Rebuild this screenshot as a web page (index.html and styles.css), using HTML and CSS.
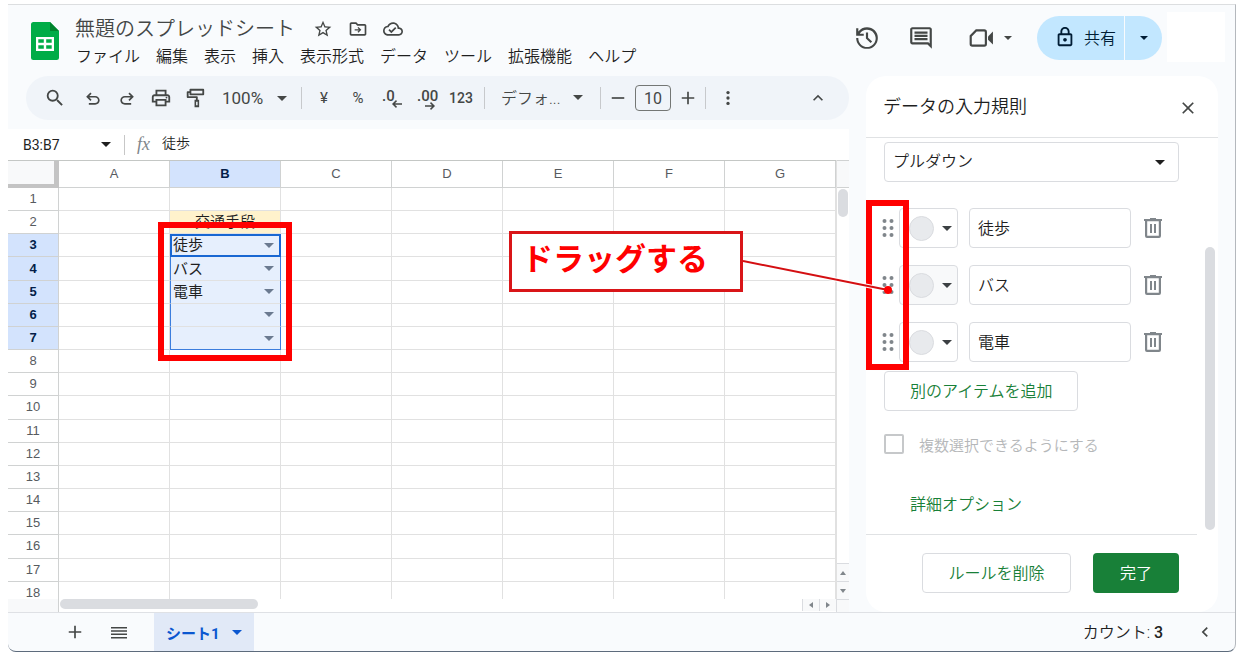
FILE: index.html
```html
<!DOCTYPE html>
<html lang="ja">
<head>
<meta charset="utf-8">
<title>無題のスプレッドシート</title>
<link rel="stylesheet" href="styles.css">
</head>
<body>
<div class="app">
  <header class="header">
    <svg class="logo" viewBox="0 0 28 38"><path fill="#00ac47" d="M2.500 0H19l9 9v26.500a2.500 2.500 0 0 1-2.500 2.500h-23A2.500 2.500 0 0 1 0 35.500v-33A2.500 2.500 0 0 1 2.500 0z"/><path fill="#00832d" d="M19 0l9 9h-9z"/><path fill="#fff" fill-rule="evenodd" d="M5 15h18v14H5zM7.300 17.300v3.500h5.500v-3.500zM15.200 17.300v3.500h5.500v-3.500zM7.300 23.200v3.500h5.500v-3.500zM15.200 23.200v3.500h5.500v-3.500z"/></svg>
    <div class="doc">
      <div class="title-row">
        <h1 class="title">無題のスプレッドシート</h1>
        <button class="icon-btn" aria-label="スター"><svg class="i20" viewBox="0 0 24 24"><path d="M22 9.240l-7.190-.62L12 2 9.190 8.630 2 9.240l5.460 4.730L5.820 21 12 17.270 18.180 21l-1.630-7.030L22 9.240zM12 15.400l-3.760 2.270 1-4.280-3.320-2.880 4.380-.38L12 6.100l1.710 4.040 4.380.38-3.320 2.880 1 4.280L12 15.400z"/></svg></button>
        <button class="icon-btn" aria-label="移動"><svg class="i20" viewBox="0 0 24 24"><path d="M20 6h-8l-2-2H4c-1.100 0-2 .9-2 2v12c0 1.100.9 2 2 2h16c1.100 0 2-.9 2-2V8c0-1.100-.9-2-2-2zm0 12H4V6h5.170l2 2H20v10zm-7.500-1.500L16 13l-3.500-3.500-1.100 1.100 1.600 1.600H8v1.600h5l-1.600 1.600z"/></svg></button>
        <button class="icon-btn" aria-label="保存状態"><svg class="i20" viewBox="0 0 24 24"><path d="M19.350 10.040C18.670 6.590 15.640 4 12 4 9.110 4 6.600 5.640 5.350 8.040 2.340 8.360 0 10.910 0 14c0 3.310 2.690 6 6 6h13c2.760 0 5-2.240 5-5 0-2.640-2.050-4.780-4.650-4.960zM19 18H6c-2.210 0-4-1.790-4-4s1.790-4 4-4h.71C7.370 7.690 9.480 6 12 6c3.040 0 5.500 2.460 5.500 5.500v.5H19c1.660 0 3 1.340 3 3s-1.340 3-3 3zm-9-3.820l-2.090-2.090L6.500 13.500 10 17l6.010-6.010-1.410-1.410z"/></svg></button>
      </div>
      <nav class="menu">
        <button>ファイル</button><button>編集</button><button>表示</button><button>挿入</button><button>表示形式</button><button>データ</button><button>ツール</button><button>拡張機能</button><button>ヘルプ</button>
      </nav>
    </div>
    <div class="actions">
      <button class="icon-btn" aria-label="変更履歴"><svg class="i26" viewBox="0 0 24 24"><path d="M12 2a10 10 0 0 0-8 4V3H2v7h7V8H5.300A8 8 0 1 1 4 12H2A10 10 0 1 0 12 2zm-1 5v5.500l4.300 4.200 1.400-1.400-3.700-3.600V7z"/></svg></button>
      <button class="icon-btn comment" aria-label="コメント"><svg class="i26" viewBox="0 0 24 24"><path d="M21.990 4c0-1.100-.89-2-1.990-2H4c-1.100 0-2 .9-2 2v12c0 1.100.9 2 2 2h14l4 4-.01-18zM20 4v13.170L18.830 16H4V4h16zM6 12h12v2H6zm0-3h12v2H6zm0-3h12v2H6z"/></svg></button>
      <button class="icon-btn meet" aria-label="ビデオ通話"><svg class="i26" viewBox="0 0 24 24"><path fill-rule="evenodd" d="M7.200 4H15a2.500 2.500 0 0 1 2.500 2.500v11A2.500 2.500 0 0 1 15 20H4a2.500 2.500 0 0 1-2.500-2.500V9.700zM8 6L3.500 10.500v7q0 .5.5.5h11q.5 0 .5-.5v-11q0-.5-.5-.5z"/><path d="M18.500 10.500L23 6v12l-4.500-4.500z"/></svg><span class="caret"></span></button>
      <div class="share">
        <button class="share-main"><svg class="i22" viewBox="0 0 24 24"><path d="M18 8h-1V6c0-2.760-2.240-5-5-5S7 3.240 7 6v2H6c-1.100 0-2 .9-2 2v10c0 1.100.9 2 2 2h12c1.100 0 2-.9 2-2V10c0-1.100-.9-2-2-2zM9 6c0-1.660 1.340-3 3-3s3 1.340 3 3v2H9V6zm9 14H6V10h12v10zm-6-3c1.100 0 2-.9 2-2s-.9-2-2-2-2 .9-2 2 .9 2 2 2z"/></svg>共有</button>
        <button class="share-more" aria-label="共有オプション"><span class="caret"></span></button>
      </div>
      <div class="avatar"></div>
    </div>
  </header>

  <div class="body">
    <main class="main">
      <div class="toolbar">
        <button class="tool search" aria-label="検索"><svg class="i22" viewBox="0 0 24 24"><path d="M15.500 14h-.79l-.28-.27A6.471 6.471 0 0 0 16 9.500 6.500 6.500 0 1 0 9.500 16c1.610 0 3.090-.59 4.230-1.570l.27.28v.79l5 4.990L20.490 19l-4.990-5zm-6 0C7.010 14 5 11.990 5 9.500S7.010 5 9.500 5 14 7.010 14 9.500 11.990 14 9.500 14z"/></svg></button>
        <button class="tool" aria-label="元に戻す"><svg class="i20" viewBox="0 0 24 24"><path d="M7 20v-2h7.500c2 0 3.500-1.300 3.500-3.200s-1.500-3.300-3.500-3.300H7.600l2.700 2.700-1.400 1.400L3.800 10.500l5.100-5.100 1.400 1.400-2.700 2.700h6.900c3.100 0 5.500 2.200 5.500 5.300S17.600 20 14.500 20z"/></svg></button>
        <button class="tool" aria-label="やり直し"><svg class="i20" viewBox="0 0 24 24"><path d="M17 20v-2H9.500c-2 0-3.500-1.300-3.500-3.200s1.500-3.300 3.500-3.300h6.900l-2.700 2.700 1.400 1.400 5.100-5.100-5.100-5.100-1.400 1.400 2.700 2.700H9.500C6.400 9.500 4 11.700 4 14.800S6.400 20 9.500 20z"/></svg></button>
        <button class="tool" aria-label="印刷"><svg class="i22" viewBox="0 0 24 24"><path d="M19 8h-1V3H6v5H5c-1.660 0-3 1.340-3 3v6h4v4h12v-4h4v-6c0-1.660-1.340-3-3-3zM8 5h8v3H8V5zm8 12v2H8v-4h8v2zm2-2v-2H6v2H4v-4c0-.55.45-1 1-1h14c.55 0 1 .45 1 1v4h-2z"/><circle cx="18" cy="11.500" r="1"/></svg></button>
        <button class="tool" aria-label="書式を貼り付け"><svg class="i22" viewBox="0 0 24 24"><path fill-rule="evenodd" d="M7 2h14a1 1 0 0 1 1 1v5a1 1 0 0 1-1 1H7a1 1 0 0 1-1-1V6.500H5V10h9a1 1 0 0 1 1 1v3h1.500v8h-5v-8H13v-2H4a1 1 0 0 1-1-1V5.500a1 1 0 0 1 1-1h2V3a1 1 0 0 1 1-1zm1 2v3h12V4zm5.200 12v4h1.600v-4z"/></svg></button>
        <button class="tool zoom">100%<span class="caret"></span></button>
        <span class="sep"></span>
        <button class="tool small">¥</button>
        <button class="tool small">%</button>
        <button class="tool dec">.0<svg class="arrow" viewBox="0 0 10 8"><path d="M4 0L0 4l4 4 1-1.200L3 4.800h7V3.200H3l2-2z"/></svg></button>
        <button class="tool dec more">.00<svg class="arrow" viewBox="0 0 10 8"><path d="M6 0l4 4-4 4-1-1.200 2-2H0V3.200h7l-2-2z"/></svg></button>
        <button class="tool num">123</button>
        <span class="sep"></span>
        <button class="tool font">デフォ...<span class="caret"></span></button>
        <span class="sep"></span>
        <button class="tool step" aria-label="縮小"><svg class="i20" viewBox="0 0 24 24"><path d="M4.500 11h15v2h-15z"/></svg></button>
        <input class="size" value="10" aria-label="フォントサイズ">
        <button class="tool step" aria-label="拡大"><svg class="i20" viewBox="0 0 24 24"><path d="M19.500 13H13v6.500h-2V13H4.500v-2H11V4.500h2V11h6.500z"/></svg></button>
        <span class="sep"></span>
        <button class="tool" aria-label="その他"><svg class="i20" viewBox="0 0 24 24"><circle cx="12" cy="5.500" r="2"/><circle cx="12" cy="12" r="2"/><circle cx="12" cy="18.500" r="2"/></svg></button>
        <button class="tool collapse" aria-label="メニューを隠す"><svg class="i20" viewBox="0 0 24 24"><path d="M12 8l-6 6 1.410 1.410L12 10.830l4.590 4.580L18 14z"/></svg></button>
      </div>

      <div class="formula">
        <button class="name-box">B3:B7<span class="caret"></span></button>
        <span class="fx">fx</span>
        <input class="formula-input" value="徒歩" aria-label="数式">
      </div>

      <div class="sheet">
        <div class="grid-wrap">
          <table class="grid">
            <colgroup><col class="rowcol"><col><col><col><col><col><col><col></colgroup>
            <thead><tr><th class="corner"></th><th>A</th><th class="sel">B</th><th>C</th><th>D</th><th>E</th><th>F</th><th>G</th></tr></thead>
            <tbody>
              <tr><th>1</th><td></td><td></td><td></td><td></td><td></td><td></td><td></td></tr>
              <tr><th>2</th><td></td><td class="head">交通手段</td><td></td><td></td><td></td><td></td><td></td></tr>
              <tr><th class="sel">3</th><td></td><td class="range active"><div class="pick">徒歩<button class="caret" aria-label="選択"></button></div></td><td></td><td></td><td></td><td></td><td></td></tr>
              <tr><th class="sel">4</th><td></td><td class="range"><div class="pick">バス<button class="caret" aria-label="選択"></button></div></td><td></td><td></td><td></td><td></td><td></td></tr>
              <tr><th class="sel">5</th><td></td><td class="range"><div class="pick">電車<button class="caret" aria-label="選択"></button></div></td><td></td><td></td><td></td><td></td><td></td></tr>
              <tr><th class="sel">6</th><td></td><td class="range"><div class="pick"><button class="caret" aria-label="選択"></button></div></td><td></td><td></td><td></td><td></td><td></td></tr>
              <tr><th class="sel">7</th><td></td><td class="range last"><div class="pick"><button class="caret" aria-label="選択"></button></div></td><td></td><td></td><td></td><td></td><td></td></tr>
              <tr><th>8</th><td></td><td></td><td></td><td></td><td></td><td></td><td></td></tr>
              <tr><th>9</th><td></td><td></td><td></td><td></td><td></td><td></td><td></td></tr>
              <tr><th>10</th><td></td><td></td><td></td><td></td><td></td><td></td><td></td></tr>
              <tr><th>11</th><td></td><td></td><td></td><td></td><td></td><td></td><td></td></tr>
              <tr><th>12</th><td></td><td></td><td></td><td></td><td></td><td></td><td></td></tr>
              <tr><th>13</th><td></td><td></td><td></td><td></td><td></td><td></td><td></td></tr>
              <tr><th>14</th><td></td><td></td><td></td><td></td><td></td><td></td><td></td></tr>
              <tr><th>15</th><td></td><td></td><td></td><td></td><td></td><td></td><td></td></tr>
              <tr><th>16</th><td></td><td></td><td></td><td></td><td></td><td></td><td></td></tr>
              <tr><th>17</th><td></td><td></td><td></td><td></td><td></td><td></td><td></td></tr>
              <tr><th>18</th><td></td><td></td><td></td><td></td><td></td><td></td><td></td></tr>
            </tbody>
          </table>
        </div>
        <div class="vscroll">
          <div class="vhead"></div>
          <div class="vthumb"></div>
          <button class="sbtn up" aria-label="上へ"></button>
          <button class="sbtn down" aria-label="下へ"></button>
        </div>
        <div class="hscroll">
          <div class="hhead"></div>
          <div class="hthumb"></div>
          <button class="sbtn left" aria-label="左へ"></button>
          <button class="sbtn right" aria-label="右へ"></button>
        </div>
        <div class="scorner"></div>
      </div>
    </main>

    <aside class="panel">
      <div class="panel-head">
        <h2>データの入力規則</h2>
        <button class="icon-btn" aria-label="閉じる"><svg class="i20" viewBox="0 0 24 24"><path d="M19 6.410L17.590 5 12 10.590 6.410 5 5 6.410 10.590 12 5 17.590 6.410 19 12 13.410 17.590 19 19 17.590 13.410 12z"/></svg></button>
      </div>
      <div class="panel-scroll">
        <div class="panel-content">
          <div class="select-wrap"><select aria-label="条件"><option>プルダウン</option></select><span class="caret"></span></div>
          <div class="items">
            <div class="item">
              <svg class="grip" viewBox="0 0 12 20"><circle cx="2.500" cy="3" r="2"/><circle cx="9.500" cy="3" r="2"/><circle cx="2.500" cy="10" r="2"/><circle cx="9.500" cy="10" r="2"/><circle cx="2.500" cy="17" r="2"/><circle cx="9.500" cy="17" r="2"/></svg>
              <button class="color" aria-label="色"><span class="dot"></span><span class="caret"></span></button>
              <input class="value" value="徒歩" aria-label="アイテム1">
              <button class="icon-btn trash" aria-label="削除"><svg viewBox="0 0 18 20"><path fill-rule="evenodd" d="M6 0h6v1h6v2h-1v15a2 2 0 0 1-2 2H3a2 2 0 0 1-2-2V3H0V1h6zM3.200 3.200v14.600h11.600V3.200zM6 6h2v9H6zM10 6h2v9h-2z"/></svg></button>
            </div>
            <div class="item">
              <svg class="grip" viewBox="0 0 12 20"><circle cx="2.500" cy="3" r="2"/><circle cx="9.500" cy="3" r="2"/><circle cx="2.500" cy="10" r="2"/><circle cx="9.500" cy="10" r="2"/><circle cx="2.500" cy="17" r="2"/><circle cx="9.500" cy="17" r="2"/></svg>
              <button class="color hover" aria-label="色"><span class="dot"></span><span class="caret"></span></button>
              <input class="value" value="バス" aria-label="アイテム2">
              <button class="icon-btn trash" aria-label="削除"><svg viewBox="0 0 18 20"><path fill-rule="evenodd" d="M6 0h6v1h6v2h-1v15a2 2 0 0 1-2 2H3a2 2 0 0 1-2-2V3H0V1h6zM3.200 3.200v14.600h11.600V3.200zM6 6h2v9H6zM10 6h2v9h-2z"/></svg></button>
            </div>
            <div class="item">
              <svg class="grip" viewBox="0 0 12 20"><circle cx="2.500" cy="3" r="2"/><circle cx="9.500" cy="3" r="2"/><circle cx="2.500" cy="10" r="2"/><circle cx="9.500" cy="10" r="2"/><circle cx="2.500" cy="17" r="2"/><circle cx="9.500" cy="17" r="2"/></svg>
              <button class="color" aria-label="色"><span class="dot"></span><span class="caret"></span></button>
              <input class="value" value="電車" aria-label="アイテム3">
              <button class="icon-btn trash" aria-label="削除"><svg viewBox="0 0 18 20"><path fill-rule="evenodd" d="M6 0h6v1h6v2h-1v15a2 2 0 0 1-2 2H3a2 2 0 0 1-2-2V3H0V1h6zM3.200 3.200v14.600h11.600V3.200zM6 6h2v9H6zM10 6h2v9h-2z"/></svg></button>
            </div>
          </div>
          <button class="outline add">別のアイテムを追加</button>
          <label class="check"><input type="checkbox" disabled>複数選択できるようにする</label>
          <button class="advanced">詳細オプション</button>
        </div>
        <div class="panel-thumb"></div>
      </div>
      <div class="panel-foot">
        <button class="outline delete">ルールを削除</button>
        <button class="done">完了</button>
      </div>
    </aside>
  </div>

  <footer class="footer">
    <button class="icon-btn" aria-label="シートを追加"><svg class="i20" viewBox="0 0 24 24"><path d="M19.500 13H13v6.500h-2V13H4.500v-2H11V4.500h2V11h6.500z"/></svg></button>
    <button class="icon-btn" aria-label="すべてのシート"><svg class="i20" viewBox="0 0 20 20"><path d="M2 5h16v1.500H2zM2 8.300h16v1.500H2zM2 11.600h16v1.500H2zM2 14.900h16v1.500H2z"/></svg></button>
    <button class="tab">シート1<span class="caret"></span></button>
    <span class="count">カウント: <b>3</b></span>
    <button class="icon-btn" aria-label="サイドパネルを表示"><svg class="i20" viewBox="0 0 24 24"><path d="M15.400 7.400L14 6l-6 6 6 6 1.400-1.400-4.600-4.600z"/></svg></button>
  </footer>

  <div class="mark mark-cells"></div>
  <div class="mark mark-grips"></div>
  <div class="callout">ドラッグする</div>
  <svg class="leader" viewBox="0 0 151 36"><path d="M0 2L145 31" stroke="#fff" stroke-width="4"/><path d="M0 2L145 31" stroke="#d40f12" stroke-width="2"/><circle cx="145" cy="31" r="4" fill="#f00"/></svg>
</div>
</body>
</html>
```

FILE: styles.css
```css
* { box-sizing: border-box; }
body {
  margin: 0;
  height: 100vh;
  padding: 4px 8px 6px;
  background: #fff;
  font-family: Roboto, "Noto Sans CJK JP", sans-serif;
  font-size: 16px;
  color: #1f1f1f;
}
button, input, select {
  font: inherit;
  color: inherit;
  background: none;
  border: 0;
  padding: 0;
  margin: 0;
}
button { white-space: nowrap; }
svg { display: block; fill: currentColor; flex: none; }
.i20 { width: 20px; height: 20px; }
.i22 { width: 22px; height: 22px; }
.i26 { width: 26px; height: 26px; }
.caret {
  flex: none;
  width: 0;
  height: 0;
  border: 5px solid transparent;
  border-top-color: currentColor;
  border-bottom: 0;
}
.icon-btn { display: flex; align-items: center; justify-content: center; color: #444746; }

.app {
  position: relative;
  display: flex;
  flex-direction: column;
  height: 100%;
  background: #f9fbfd;
  border: 1px solid #dcdee0;
  border-width: 1px 1px 1px 0;
  border-right-color: #b4b8bd;
  border-bottom-color: #5d6b7c;
  border-radius: 0 0 8px 8px;
}

.header { display: flex; height: 71px; padding: 7px 10px 0 23px; }
.logo { width: 28px; height: 38px; margin-top: 10px; }
.doc { margin-left: 16px; padding-top: 1px; }
.title-row { display: flex; align-items: center; gap: 15px; height: 32px; }
.title { margin: 0 3px 0 0; font-size: 20px; font-weight: 350; line-height: 32px; color: #444746; }
.menu { display: flex; gap: 16px; padding-left: 1px; line-height: 24px; font-weight: 350; }
.actions { display: flex; align-items: flex-start; margin-left: auto; }
.actions > .icon-btn { height: 52px; margin-right: 28px; }
.actions > .comment { margin-right: 34px; }
.actions > .meet { gap: 10px; margin-right: 25px; }
.actions .caret { border-width: 4px 4px 0; }
.share { display: flex; height: 44px; margin-top: 4px; color: #001d35; font-weight: 350; }
.share-main { display: flex; align-items: center; gap: 8px; width: 87px; padding: 0 0 2px 17px; background: #c2e7ff; border-radius: 22px 0 0 22px; }
.share-more { display: flex; align-items: center; justify-content: center; width: 37px; margin-left: 1px; background: #c2e7ff; border-radius: 0 22px 22px 0; }
.avatar { width: 58px; height: 50px; margin-left: 5px; background: #fff; }

.body { display: flex; flex: 1; min-height: 0; gap: 17px; padding-right: 17px; }
.main { display: flex; flex-direction: column; flex: 1; min-width: 0; }
.toolbar {
  display: flex;
  align-items: center;
  height: 44px;
  margin-left: 18px;
  padding: 0 14px 0 10px;
  background: #f0f4f9;
  border-radius: 22px;
  color: #444746;
}
.tool { display: flex; align-items: center; justify-content: center; width: 34px; height: 32px; flex: none; }
.search { width: 38px; margin-right: 2px; }
.zoom { width: 84px; justify-content: space-between; padding: 0 9px 0 10px; font-size: 17px; }
.small { font-size: 15px; }
.dec { position: relative; justify-content: flex-start; padding: 0 0 4px 7px; font-size: 15px; font-weight: 500; }
.more { padding-left: 8px; }
.arrow { position: absolute; right: 7px; bottom: 6px; width: 10px; height: 8px; }
.more .arrow { right: 8px; bottom: 4px; }
.num { width: 36px; font-size: 14px; font-weight: 500; }
.font { width: 105px; justify-content: space-between; padding: 0 12px 2px 11px; font-weight: 350; }
.step { width: 24px; }
.size { width: 36px; height: 26px; margin: 0 5px; border: 1px solid #747775; border-radius: 4px; text-align: center; font-size: 16px; }
.sep { width: 1px; height: 22px; margin: 0 5px; background: #c7c9cc; flex: none; }
.collapse { margin-left: auto; }

.formula { display: flex; align-items: center; height: 31px; margin-top: 9px; background: #fff; font-size: 14px; }
.name-box { display: flex; align-items: center; justify-content: space-between; width: 117px; height: 20px; padding: 0 13px 0 15px; border-right: 1px solid #c7c7c7; }
.fx { width: 37px; padding-left: 12px; font: italic 18px "Liberation Serif", serif; color: #80868b; }
.formula-input { flex: 1; min-width: 0; padding-bottom: 5px; font-weight: 350; }

.sheet { display: grid; grid-template-columns: 1fr 13px; grid-template-rows: 1fr 13px; flex: 1; min-height: 0; background: #fff; }
.grid-wrap { min-height: 0; height: 100%; overflow: hidden; }
.grid { width: 100%; height: calc(100% + 6px); table-layout: fixed; border-collapse: separate; border-spacing: 0; border-top: 1px solid #c4c7c5; font-size: 15px; }
.rowcol { width: 51px; }
.grid th, .grid td { height: 23px; padding: 0; line-height: 20px; border-right: 1px solid #e1e1e1; border-bottom: 1px solid #e1e1e1; }
.grid th { font-family: "Liberation Sans", sans-serif; font-size: 13px; font-weight: 400; color: #575b5f; border-color: #d0d2d2; }
.grid thead th { height: 27px; }
.grid .corner { background: #f8f9fa; border-right: 5px solid #c4c4c4; border-bottom: 4px solid #c4c4c4; }
.grid th.sel { background: #d3e3fd; color: #041e49; font-weight: 700; }
.grid .head { background: #fff2cc; text-align: center; font-weight: 350; }
.grid .range { background: #e6effd; border-right-color: #3b7ddd; border-left: 1px solid #3b7ddd; }
.grid .active { outline: 2px solid #1967d2; outline-offset: -2px; }
.grid .last { border-bottom-color: #3b7ddd; }
.pick { display: flex; align-items: center; justify-content: space-between; padding: 0 6px 0 2px; }
.pick .caret { margin-left: auto; color: #6b7a90; }
.vscroll { display: flex; flex-direction: column; border-left: 1px solid #e1e1e1; }
.vhead { height: 28px; background: #f8f9fa; border: 1px solid #d0d2d2; border-width: 1px 0; }
.vthumb { width: 10px; height: 28px; margin: 1px 1px auto; background: #dadce0; border-radius: 5px; }
.hscroll { display: flex; }
.hhead { width: 51px; background: #f8f9fa; border-right: 1px solid #d0d2d2; }
.hthumb { width: 198px; height: 10px; margin: 0 auto 0 1px; background: #dadce0; border-radius: 5px; }
.sbtn { display: flex; align-items: center; justify-content: center; flex: none; height: 18px; background: #f8f9fa; border-top: 1px solid #dadce0; }
.sbtn::before { content: ""; border: 3px solid transparent; }
.up::before { border-bottom: 4px solid #80868b; border-top: 0; }
.down::before { border-top: 4px solid #80868b; border-bottom: 0; }
.left, .right { width: 17px; height: 12px; border-top: 0; border-left: 1px solid #dadce0; }
.left::before { border-right: 4px solid #80868b; border-left: 0; }
.right::before { border-left: 4px solid #80868b; border-right: 0; }
.scorner { background: #f8f9fa; border: 1px solid #dadce0; border-width: 1px 0 0 1px; }

.panel { display: flex; flex-direction: column; flex: none; width: 352px; background: #fff; border-radius: 20px; font-weight: 350; }
.panel-head { display: flex; align-items: center; justify-content: space-between; height: 62px; padding: 0 20px 0 17px; border-bottom: 1px solid #e0e2e4; }
.panel-head h2 { margin: 0; padding-bottom: 3px; font-size: 18px; font-weight: 350; }
.panel-head .icon-btn { padding-top: 2px; }
.panel-scroll { display: flex; flex: 1; min-height: 0; }
.panel-content { flex: 1; min-width: 0; padding: 4px 18px 0; border-bottom: 1px solid #e0e2e4; }
.select-wrap { display: flex; align-items: center; height: 40px; padding: 0 13px 0 8px; border: 1px solid #dadce0; border-radius: 4px; }
.select-wrap select { flex: 1; appearance: none; padding-bottom: 2px; }
.items { display: grid; grid-template-columns: minmax(0, 1fr); gap: 17px; margin: 26px 0 9px; }
.item { display: flex; align-items: center; height: 40px; }
.grip { width: 12px; height: 20px; margin: 0 5px 0 -2px; color: #80868b; }
.color { display: flex; align-items: center; justify-content: space-between; width: 59px; height: 40px; padding: 0 5px 0 9px; border: 1px solid #dadce0; border-radius: 4px; color: #3c4043; }
.hover { background: #f8f9fa; }
.dot { width: 25px; height: 25px; border-radius: 50%; background: #e8eaed; border: 1px solid #dadce0; }
.value { flex: 1; min-width: 0; height: 40px; margin: 0 13px 0 11px; padding: 0 8px 2px; border: 1px solid #dadce0; border-radius: 4px; }
.trash { flex: none; width: 18px; margin-right: 17px; color: #80868b; }
.trash svg { width: 18px; height: 20px; }
.outline { height: 40px; padding-bottom: 3px; border: 1px solid #dadce0; border-radius: 4px; color: #188038; }
.add { display: block; padding: 0 25px 3px; }
.check { display: flex; align-items: center; gap: 15px; height: 20px; margin-top: 23px; font-size: 15px; color: #b5b7b9; }
.check input { appearance: none; width: 20px; height: 20px; border: 2px solid #c6c8ca; border-radius: 2px; }
.advanced { display: block; height: 24px; margin: 37px 0 0 26px; color: #188038; }
.panel-thumb { flex: none; width: 10px; margin: 109px 3px 5px 8px; background: #dadce0; border-radius: 5px; }
.panel-foot { display: flex; justify-content: flex-end; gap: 22px; padding: 18px 39px 19px 0; }
.delete { width: 149px; }
.done { width: 86px; height: 40px; padding-bottom: 3px; background: #188038; border-radius: 4px; color: #fff; }

.footer { display: flex; align-items: center; height: 39px; border-top: 1px solid #dfe1e5; padding: 0 20px 0 57px; }
.footer > .icon-btn { width: 20px; }
.footer > .icon-btn + .icon-btn { margin-left: 24px; }
.tab { display: flex; align-items: center; gap: 12px; align-self: stretch; margin-left: 25px; padding: 0 12px; background: #e1e9f7; color: #0b57d0; font-size: 15px; font-weight: 700; }
.count { margin-left: auto; margin-right: 32px; padding-bottom: 2px; font-weight: 350; }
.count b { font-weight: 500; }

.mark { position: absolute; border: 6px solid #f00; pointer-events: none; }
.mark-cells { left: 150px; top: 217px; width: 134px; height: 139px; }
.mark-grips { left: 858px; top: 195px; width: 43px; height: 170px; }
.callout { position: absolute; left: 501px; top: 226px; width: 234px; height: 61px; padding-left: 10px; background: #fff; border: 3px solid #d91518; color: #f00; font-size: 31px; font-weight: 700; line-height: 52px; }
.leader { position: absolute; left: 735px; top: 254px; width: 151px; height: 36px; }
```
